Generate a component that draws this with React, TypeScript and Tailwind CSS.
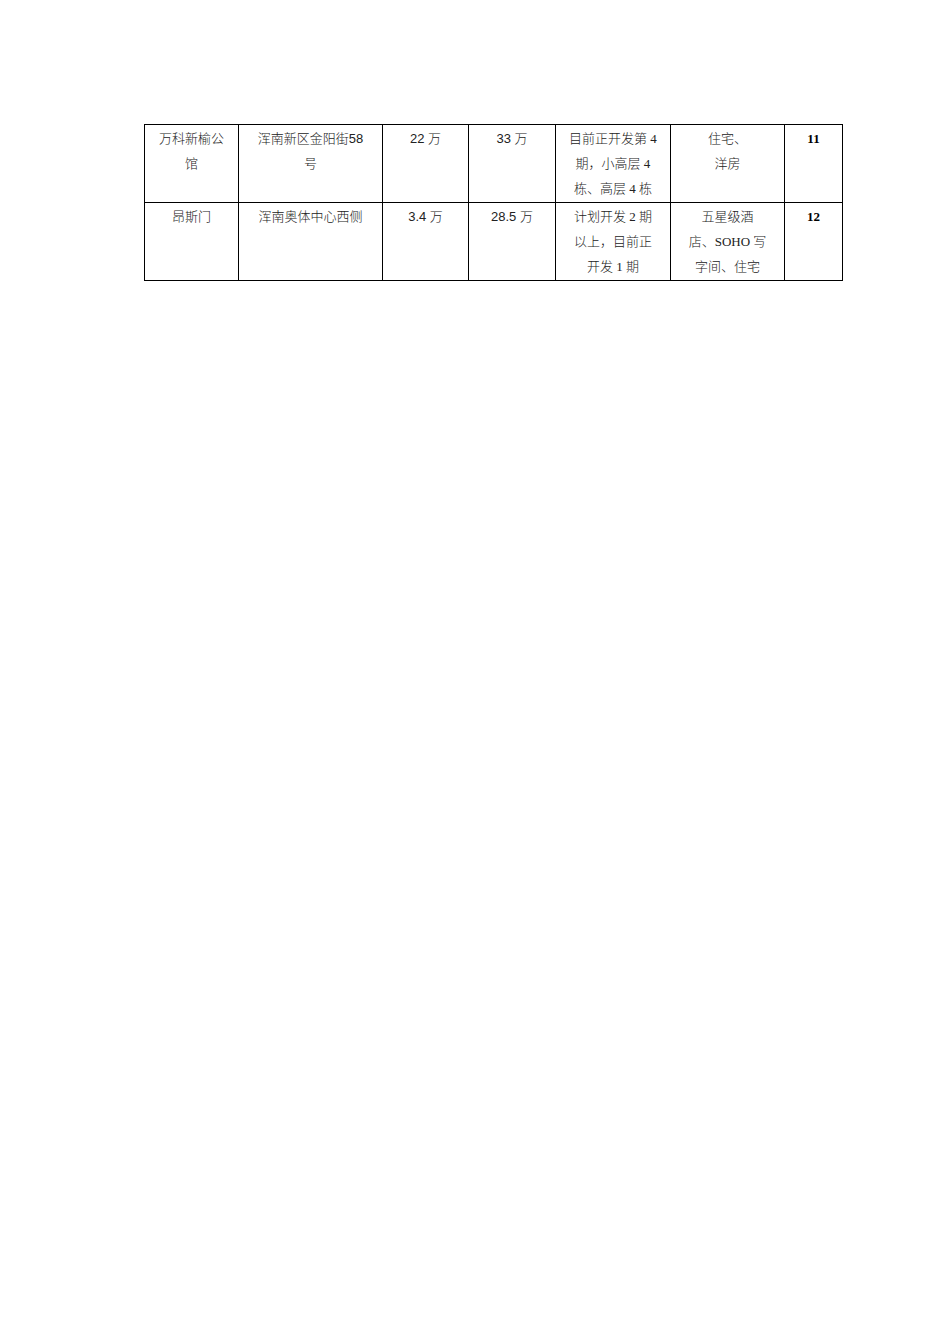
const sans = "font-['Liberation_Sans','Noto_Sans_CJK_SC',sans-serif]";
const serif = "font-['Liberation_Serif','Noto_Sans_CJK_SC',serif]";

type Cell = { lines: string[]; font: string; bold?: boolean; w: string };

const rows: Cell[][] = [
  [
    { lines: ["万科新榆公", "馆"], font: serif, w: "w-[94px]" },
    { lines: ["浑南新区金阳街58", "号"], font: sans, w: "w-[144px]" },
    { lines: ["22 万"], font: sans, w: "w-[86px]" },
    { lines: ["33 万"], font: sans, w: "w-[87px]" },
    { lines: ["目前正开发第 4", "期，小高层 4", "栋、高层 4 栋"], font: serif, w: "w-[115px]" },
    { lines: ["住宅、", "洋房"], font: serif, w: "w-[114px]" },
    { lines: ["11"], font: serif, bold: true, w: "w-[58px]" },
  ],
  [
    { lines: ["昂斯门"], font: serif, w: "w-[94px]" },
    { lines: ["浑南奥体中心西侧"], font: sans, w: "w-[144px]" },
    { lines: ["3.4 万"], font: sans, w: "w-[86px]" },
    { lines: ["28.5 万"], font: sans, w: "w-[87px]" },
    { lines: ["计划开发 2 期", "以上，目前正", "开发 1 期"], font: serif, w: "w-[115px]" },
    { lines: ["五星级酒", "店、SOHO 写", "字间、住宅"], font: serif, w: "w-[114px]" },
    { lines: ["12"], font: serif, bold: true, w: "w-[58px]" },
  ],
];

export default function App() {
  return (
    <div className="min-h-[1344px] w-[950px] bg-white pt-[124px] pl-[144px]">
      <table className="border-collapse table-fixed text-[13px] text-[#222]">
        <tbody>
          {rows.map((row, i) => (
            <tr key={i} className="h-[78px]">
              {row.map((c, j) => (
                <td
                  key={j}
                  className={`${c.w} ${c.font} ${c.bold ? "font-bold text-black" : "font-light"} border border-black align-top text-center leading-[25px] pt-px px-1`}
                >
                  {c.lines.map((l, k) => (
                    <div key={k}>{l}</div>
                  ))}
                </td>
              ))}
            </tr>
          ))}
        </tbody>
      </table>
    </div>
  );
}
